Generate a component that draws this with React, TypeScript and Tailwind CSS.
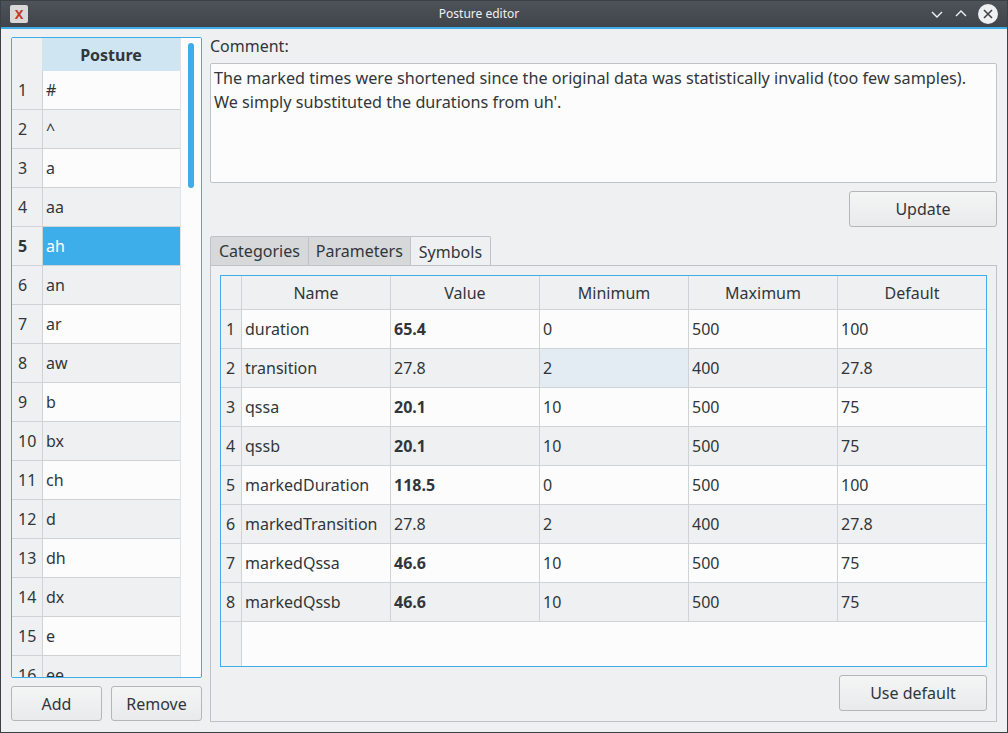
const postures = ["#", "^", "a", "aa", "ah", "an", "ar", "aw", "b", "bx", "ch", "d", "dh", "dx", "e", "ee"];

const symbols: [string, string, boolean, string, string, string][] = [
  ["duration", "65.4", true, "0", "500", "100"],
  ["transition", "27.8", false, "2", "400", "27.8"],
  ["qssa", "20.1", true, "10", "500", "75"],
  ["qssb", "20.1", true, "10", "500", "75"],
  ["markedDuration", "118.5", true, "0", "500", "100"],
  ["markedTransition", "27.8", false, "2", "400", "27.8"],
  ["markedQssa", "46.6", true, "10", "500", "75"],
  ["markedQssb", "46.6", true, "10", "500", "75"],
];

function Btn({ label, className }: { label: string; className: string }) {
  return (
    <button className={`rounded-[3px] border border-[#b4b6b8] bg-gradient-to-b from-[#f4f5f5] to-[#e9eaeb] text-[16px] text-[#31363b] ${className}`}>
      {label}
    </button>
  );
}

export default function App() {
  return (
    <div className="w-[1008px] h-[733px] flex flex-col bg-[#eff0f1] text-[#31363b] overflow-hidden border border-[#3b4045]" style={{ fontFamily: '"Noto Sans", "Open Sans", sans-serif' }}>
      {/* title bar */}
      <div className="h-[28px] shrink-0 flex items-center bg-gradient-to-b from-[#4d5359] to-[#40454b] border-b-2 border-[#3daee9] px-[9px]">
        <div className="w-[18px] h-[18px] rounded-[2px] bg-[#d8d8d8] flex items-center justify-center text-[13px] font-bold text-[#c0392b] leading-none">X</div>
        <div className="flex-1 text-center text-[12px] text-[#eff0f1]">Posture editor</div>
        <div className="flex items-center gap-[10px] text-[#eff0f1]">
          <svg width="14" height="14" viewBox="0 0 14 14" fill="none" stroke="currentColor" strokeWidth="1.4"><path d="M2 5l5 5 5-5" /></svg>
          <svg width="14" height="14" viewBox="0 0 14 14" fill="none" stroke="currentColor" strokeWidth="1.4"><path d="M2 9l5-5 5 5" /></svg>
          <div className="w-[20px] h-[20px] rounded-full bg-[#eff0f1] flex items-center justify-center">
            <svg width="12" height="12" viewBox="0 0 12 12" stroke="#40454b" strokeWidth="1.6"><path d="M2 2l8 8M10 2l-8 8" /></svg>
          </div>
        </div>
      </div>

      <div className="flex-1 flex gap-[8px] pl-[10px] pr-[10px] pt-[8px] pb-[10px]">
        {/* left */}
        <div className="w-[192px] flex flex-col">
          <div className="h-[641px] border border-[#3daee9] rounded-[2px] bg-[#fcfcfc] flex overflow-hidden">
            <div className="flex-1 flex flex-col">
              <div className="h-[33px] shrink-0 flex">
                <div className="w-[30px] bg-[#eff0f1]" />
                <div className="flex-1 bg-[#cfe5f1] flex items-center justify-center font-bold text-[16px]">Posture</div>
              </div>
              {postures.map((p, i) => {
                const sel = i === 4;
                return (
                  <div key={p} className="h-[39px] shrink-0 flex border-b border-[#d0d3d6]">
                    <div className={`w-[30px] bg-[#eff0f1] flex items-center pl-[6px] text-[16px] ${sel ? "font-bold" : ""}`}>{i + 1}</div>
                    <div className={`flex-1 flex items-center pl-[3px] text-[16px] border-l border-[#d0d3d6] ${sel ? "bg-[#3daee9] text-white" : i % 2 ? "bg-[#eff0f1]" : "bg-[#fcfcfc]"}`}>{p}</div>
                  </div>
                );
              })}
            </div>
            <div className="w-[21px] bg-[#fcfcfc] border-l border-[#e0e2e4] pt-[5px] flex justify-center">
              <div className="w-[6px] h-[145px] rounded-full bg-[#3daee9]" />
            </div>
          </div>
          <div className="flex gap-[9px] mt-[8px]">
            <Btn label="Add" className="w-[91px] h-[35px]" />
            <Btn label="Remove" className="w-[91px] h-[35px]" />
          </div>
        </div>

        {/* right */}
        <div className="flex-1 flex flex-col">
          <div className="text-[16px] leading-[22px] h-[20px] -mt-[2px]">Comment:</div>
          <div className="mt-[8px] h-[120px] border border-[#c0c3c6] rounded-[2px] bg-[#fcfcfc] px-[3px] py-[2px] text-[16.2px] leading-[24px]">
            The marked times were shortened since the original data was statistically invalid (too few samples).<br />
            We simply substituted the durations from uh'.
          </div>
          <div className="flex justify-end mt-[8px]">
            <Btn label="Update" className="w-[148px] h-[36px]" />
          </div>
          <div className="mt-[9px] flex h-[30px]">
            <div className="px-[8px] flex items-center bg-[#d6d8da] border border-[#c0c3c6] rounded-tl-[2px] text-[16px]">Categories</div>
            <div className="px-[7px] flex items-center bg-[#d6d8da] border-y border-r border-[#c0c3c6] text-[16px]">Parameters</div>
            <div className="px-[8px] flex items-center bg-[#eff0f1] border-t border-r border-[#c0c3c6] rounded-tr-[2px] text-[16px]">Symbols</div>
          </div>
          <div className="flex-1 border border-[#c0c3c6] -mt-px p-[9px] flex flex-col">
            <div className="h-[392px] border border-[#3daee9] bg-[#fcfcfc] flex flex-col overflow-hidden">
              <div className="h-[34px] shrink-0 flex bg-[#eff0f1] border-b border-[#d0d3d6] text-[16px]">
                <div className="w-[20px]" />
                {["Name", "Value", "Minimum", "Maximum", "Default"].map(h => (
                  <div key={h} className="w-[149px] border-l border-[#d0d3d6] flex items-center justify-center">{h}</div>
                ))}
              </div>
              {symbols.map((r, i) => (
                <div key={r[0]} className="h-[39px] shrink-0 flex text-[16px] border-b border-[#d0d3d6]">
                  <div className="w-[20px] bg-[#eff0f1] flex items-center pl-[5px]">{i + 1}</div>
                  {[r[0], r[1], r[3], r[4], r[5]].map((c, j) => (
                    <div key={j} className={`w-[149px] border-l border-[#d0d3d6] flex items-center pl-[3px] ${j === 1 && r[2] ? "font-bold" : ""} ${i === 1 && j === 2 ? "bg-[#e3ebf3]" : i % 2 ? "bg-[#eff0f1]" : "bg-[#fcfcfc]"}`}>{c}</div>
                  ))}
                </div>
              ))}
              <div className="flex-1 flex">
                <div className="w-[20px] bg-[#eff0f1]" />
                <div className="flex-1 border-l border-[#d0d3d6]" />
              </div>
            </div>
            <div className="flex justify-end mt-[8px]">
              <Btn label="Use default" className="w-[148px] h-[36px]" />
            </div>
          </div>
        </div>
      </div>
    </div>
  );
}
